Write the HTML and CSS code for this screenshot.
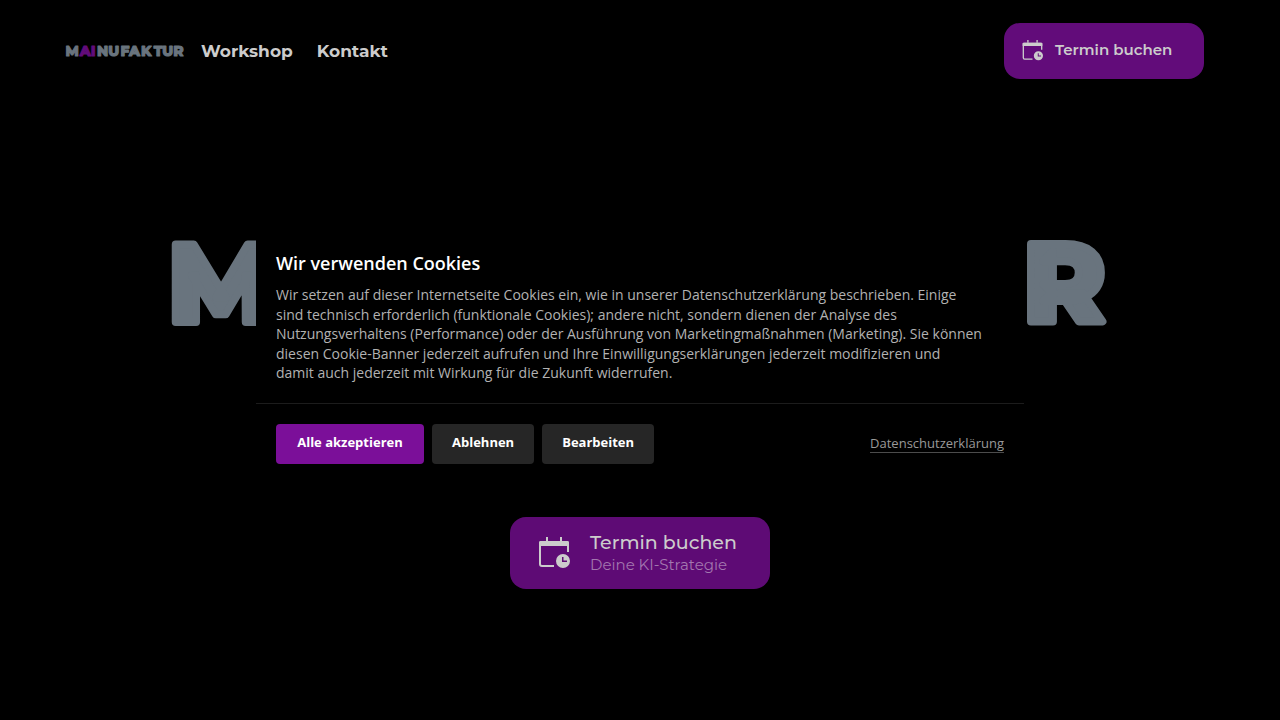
FILE: index.html
```html
<!DOCTYPE html>
<html lang="de">
  <head>
    <meta charset="UTF-8" />
    <meta name="viewport" content="width=device-width, initial-scale=1.0" />
    <title>MAINUFAKTUR</title>
    <link rel="stylesheet" href="styles.css">
  </head>
  <body>
    <!-- Shared icon -->
    <svg class="sprite" aria-hidden="true">
      <symbol id="calendar" viewBox="0 0 32 32">
        <path d="M9 0v4M23 0v4" fill="none" stroke="currentColor" stroke-width="2" />
        <path d="M16 29H4a2 2 0 0 1-2-2V6a1 1 0 0 1 1-1h26a1 1 0 0 1 1 1v9" fill="none" stroke="currentColor" stroke-width="2" />
        <path d="M1 9V5.500Q1 4 2.500 4h27Q31 4 31 5.500V9z" fill="currentColor" />
        <path fill-rule="evenodd" d="M25 17a7 7 0 1 1 0 14a7 7 0 0 1 0-14zM24 20v5h5v-1.500h-3.500V20z" fill="currentColor" />
      </symbol>
    </svg>

    <header class="header">
      <a class="brand" href="#">
        <svg class="wordmark" viewBox="0 0 936 86" role="img" aria-label="MAINUFAKTUR">
          <text x="-5" y="82">M</text>
          <text class="accent" x="108" y="82">AI</text>
          <text x="245" y="82">NU</text>
          <text x="432" y="82">FA</text>
          <text x="596" y="82">K</text>
          <text class="end" x="934" y="82">TUR</text>
        </svg>
      </a>
      <nav class="nav">
        <a href="#workshop">Workshop</a>
        <a href="#kontakt">Kontakt</a>
      </nav>
      <button class="booking booking-small" type="button">
        <svg class="icon" aria-hidden="true"><use href="#calendar" /></svg>
        <span class="booking-title">Termin buchen</span>
      </button>
    </header>

    <main class="hero">
      <svg class="wordmark" viewBox="0 0 936 86" role="img" aria-label="MAINUFAKTUR">
        <text x="-5" y="82">M</text>
        <text class="accent" x="108" y="82">AI</text>
        <text x="245" y="82">NU</text>
        <text x="432" y="82">FA</text>
        <text x="596" y="82">K</text>
        <text class="end" x="934" y="82">TUR</text>
      </svg>
      <button class="booking booking-large" type="button">
        <svg class="icon" aria-hidden="true"><use href="#calendar" /></svg>
        <span class="booking-text">
          <span class="booking-title">Termin buchen</span>
          <span class="booking-subtitle">Deine KI-Strategie</span>
        </span>
      </button>
    </main>

    <div class="cookie-overlay">
      <section class="cookie-banner" role="dialog" aria-labelledby="cookie-title">
        <div class="cookie-content">
          <h2 id="cookie-title">Wir verwenden Cookies</h2>
          <p>
            Wir setzen auf dieser Internetseite Cookies ein, wie in unserer Datenschutzerklärung beschrieben. Einige<br>
            sind technisch erforderlich (funktionale Cookies); andere nicht, sondern dienen der Analyse des<br>
            Nutzungsverhaltens (Performance) oder der Ausführung von Marketingmaßnahmen (Marketing). Sie können<br>
            diesen Cookie-Banner jederzeit aufrufen und Ihre Einwilligungserklärungen jederzeit modifizieren und<br>
            damit auch jederzeit mit Wirkung für die Zukunft widerrufen.
          </p>
        </div>
        <div class="cookie-actions">
          <button class="btn btn-primary" type="button">Alle akzeptieren</button>
          <button class="btn" type="button">Ablehnen</button>
          <button class="btn" type="button">Bearbeiten</button>
          <a class="privacy-link" href="#datenschutz">Datenschutzerklärung</a>
        </div>
      </section>
    </div>
  </body>
</html>
```
FILE: styles.css
```css
* {
  box-sizing: border-box;
}

body {
  margin: 0;
  min-height: 100vh;
  background-color: #000;
  color: #ccc;
  font-family: Montserrat, Inter, sans-serif;
}

.sprite {
  position: absolute;
  width: 0;
  height: 0;
}

/* Header */

.header {
  display: flex;
  align-items: center;
  padding: 23px 76px 0 66px;
}

.brand {
  width: 118px;
  line-height: 0;
}

.nav {
  display: flex;
  gap: 24px;
  margin-left: 17px;
}

.nav a {
  color: #ccc;
  font-size: 17px;
  font-weight: 700;
  line-height: 24px;
  text-decoration: none;
}

.wordmark {
  width: 100%;
  overflow: visible;
  fill: #69747e;
  stroke: #69747e;
  stroke-width: 8;
  stroke-linejoin: round;
  font-family: Montserrat, Inter, sans-serif;
  font-size: 111px;
  font-weight: 800;
}

.wordmark .accent {
  fill: #620c7a;
  stroke: #620c7a;
}

.wordmark .end {
  text-anchor: end;
}

/* Booking buttons */

.booking {
  display: flex;
  align-items: center;
  border: none;
  border-radius: 16px;
  background-color: #620c7a;
  color: #ccc;
  font-family: inherit;
  text-align: left;
  cursor: pointer;
}

.booking-small {
  gap: 12px;
  width: 200px;
  height: 56px;
  margin-left: auto;
  padding: 0 18px 2px;
}

.booking-small .icon {
  width: 21px;
  height: 21px;
}

.booking-small .booking-title {
  font-size: 15px;
  font-weight: 600;
  line-height: 20px;
}

.booking-large {
  gap: 20px;
  width: 260px;
  height: 72px;
  padding: 0 28px;
  background-color: #5e0b75;
}

.booking-large .icon {
  width: 32px;
  height: 32px;
}

.booking-text {
  display: flex;
  flex-direction: column;
}

.booking-large .booking-title {
  font-size: 19px;
  font-weight: 500;
  line-height: 24px;
}

.booking-subtitle {
  color: #a377af;
  font-size: 15px;
  line-height: 20px;
}

/* Hero */

.hero {
  display: flex;
  flex-direction: column;
  align-items: center;
  gap: 191px;
  padding-top: 161px;
}

.hero .wordmark {
  width: 73%;
}

/* Cookie banner */

.cookie-overlay {
  position: fixed;
  inset: 0;
  display: flex;
  align-items: center;
  justify-content: center;
  font-family: "Open Sans", sans-serif;
}

.cookie-banner {
  width: 60%;
  border-radius: 4px;
  background-color: #000;
}

.cookie-content {
  padding: 16px 20px 20px;
  border-bottom: 1px solid #1c1c1c;
}

.cookie-content h2 {
  margin: 0 0 10px;
  color: #fff;
  font-size: 18px;
  font-weight: 600;
  line-height: 23px;
}

.cookie-content p {
  margin: 0;
  color: #b2b2b2;
  font-size: 14px;
  line-height: 1.4;
}

.cookie-actions {
  display: flex;
  align-items: center;
  flex-wrap: wrap;
  gap: 8px;
  padding: 20px;
}

.btn {
  height: 40px;
  padding: 0 20px 4px;
  border: none;
  border-radius: 4px;
  background-color: #262626;
  color: #fff;
  font-family: inherit;
  font-size: 13px;
  font-weight: 700;
  cursor: pointer;
}

.btn-primary {
  min-width: 148px;
  background-color: #7b0f99;
}

.privacy-link {
  margin-left: auto;
  border-bottom: 1px solid #4c4c4c;
  color: #999;
  font-size: 13px;
  line-height: 18px;
  text-decoration: none;
}
```
